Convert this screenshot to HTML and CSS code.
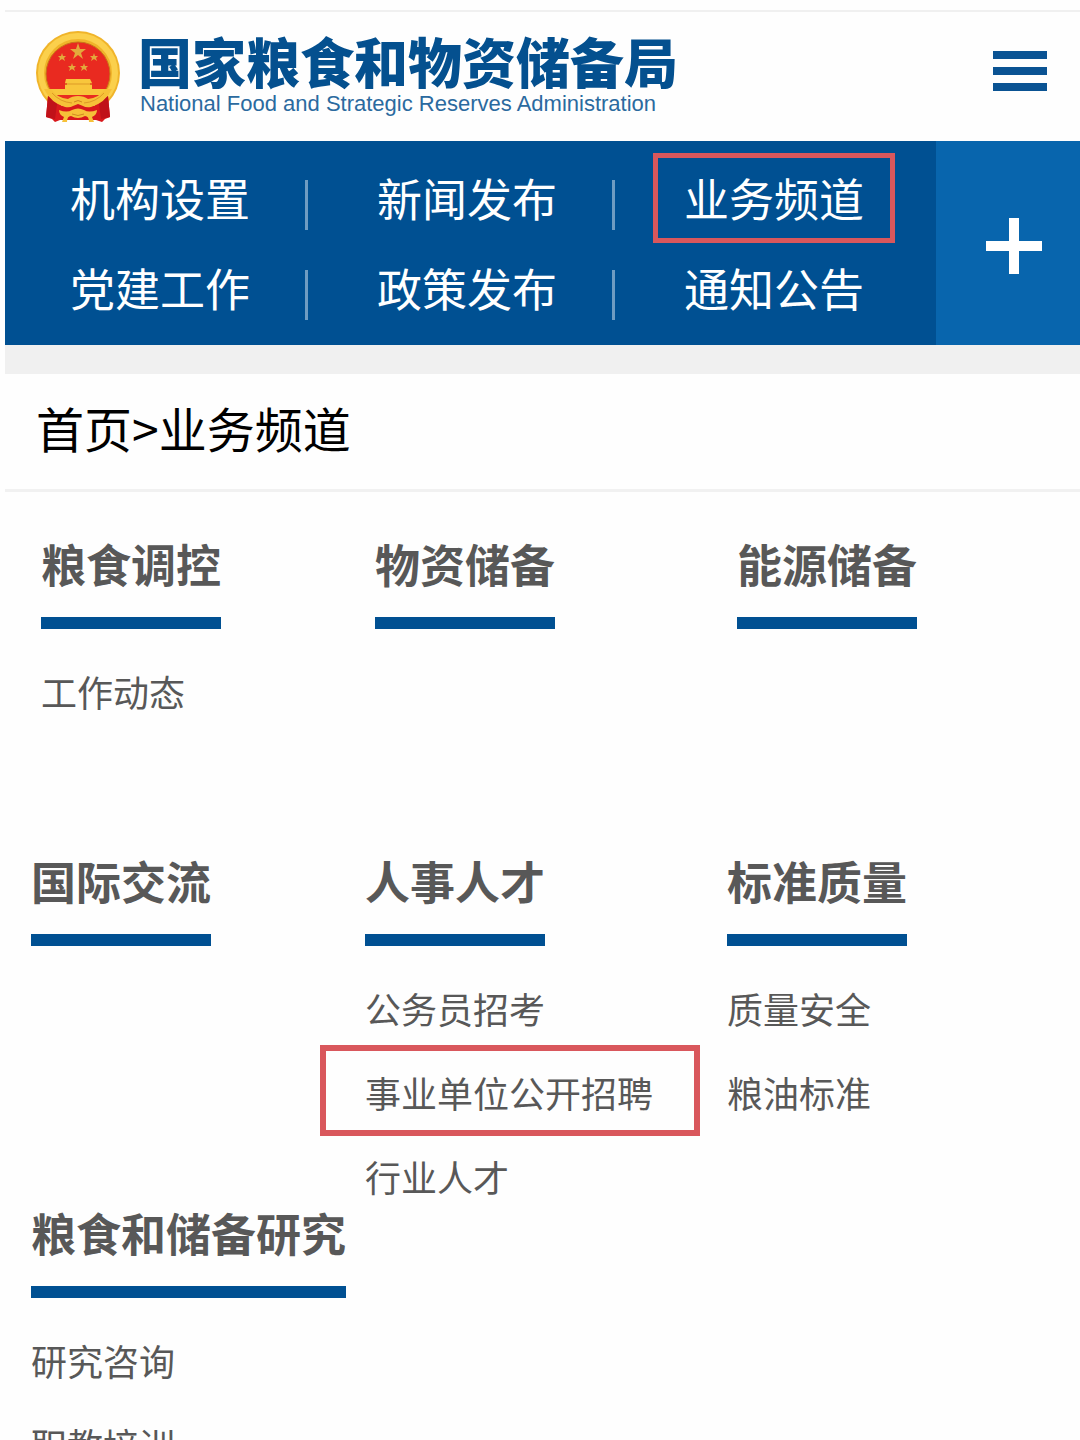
FILE: index.html
```html
<!DOCTYPE html>
<html lang="zh-CN">
<head>
  <meta charset="UTF-8">
  <meta name="viewport" content="width=device-width, initial-scale=1.0">
  <title>业务频道</title>
  <link rel="stylesheet" href="styles.css">
</head>
<body>
  <header class="header">
    <a class="logo" href="#">
      <svg class="emblem" viewBox="0 0 86 92" aria-hidden="true">
        <!-- wreath and field -->
        <circle cx="42" cy="42" r="42" fill="#f0b42a"/>
        <circle cx="42" cy="42" r="37" fill="none" stroke="#fbd04c" stroke-width="6"/>
        <circle cx="42" cy="43" r="32" fill="#e92a20" stroke="#c97718" stroke-width="1"/>
        <g fill="#e3a93c">
          <path d="M42 12l2 6h6l-5 4 2 6-5-4-5 4 2-6-5-4h6z"/>
          <path d="M26 22l1 3h3l-2 2 1 3-3-2-3 2 1-3-2-2h3zM58 22l1 3h3l-2 2 1 3-3-2-3 2 1-3-2-2h3zM36 32l1 3h3l-2 2 1 3-3-2-3 2 1-3-2-2h3zM48 32l1 3h3l-2 2 1 3-3-2-3 2 1-3-2-2h3z"/>
        </g>
        <!-- gate -->
        <path d="M30 48h24l2 4h-2v2h2v4h14l3 6H12l3-6h14v-4h2v-2h-2z" fill="#f8c63c"/>
        <path d="M29 53h27" stroke="#dd9a26"/>
        <!-- ribbon -->
        <path d="M12 65l14 10 16-6 16 6 14-10 2 21-5 2-3 3-6-2H24l-5 2-3-3-6-2z" fill="#d8181c"/>
        <path d="M12 65l9 8-2 15-9-2zM72 65l-9 8 2 15 9-2z" fill="#c01119"/>
        <path d="M8 58q7 14 21 18 5 1 8-1l5-2 5 2q3 2 8 1 14-4 21-18l-7 0q-6 9-17 10-4-3-10-3t-10 3q-11-1-17-10z" fill="#f6c138"/>
        <path d="M16 62q8 9 20 10M68 62q-8 9-20 10" fill="none" stroke="#dd9a26"/>
        <path d="M23 79q8 3 13 0 6-3 12 0 5 3 13 0 0 5-5 7l2 5h-5q0-6-4-6-7 4-14 0-4 0-4 6h-5l2-5q-5-2-5-7z" fill="#f6c138"/>
        <path d="M38 71q4-3 8 0M36 83q6 3 12 0" fill="none" stroke="#d08a20"/>
      </svg>
      <span class="logo-text">
        <span class="logo-cn">国家粮食和物资储备局</span>
        <span class="logo-en">National Food and Strategic Reserves Administration</span>
      </span>
    </a>
    <button class="menu-btn" type="button" aria-label="菜单">
      <svg class="menu-icon" viewBox="0 0 54 40" aria-hidden="true">
        <path d="M0 4h54M0 20h54M0 36h54" stroke="#0a5393" stroke-width="8"/>
      </svg>
    </button>
  </header>

  <nav class="nav">
    <ul class="nav-list">
      <li><a href="#">机构设置</a></li>
      <li><a href="#">新闻发布</a></li>
      <li><a class="marked" href="#">业务频道</a></li>
      <li><a href="#">党建工作</a></li>
      <li><a href="#">政策发布</a></li>
      <li><a href="#">通知公告</a></li>
    </ul>
    <button class="nav-more" type="button" aria-label="更多">
      <svg class="plus-icon" viewBox="0 0 56 56" aria-hidden="true">
        <path d="M28 0v56M0 28h56" stroke="#fff" stroke-width="10"/>
      </svg>
    </button>
  </nav>

  <div class="breadcrumb"><a href="#">首页</a>&gt;<a href="#">业务频道</a></div>

  <main class="channels">
    <!-- first row -->
    <div class="row row-first">
      <section class="channel">
        <h2>粮食调控</h2>
        <ul>
          <li><a href="#">工作动态</a></li>
        </ul>
      </section>
      <section class="channel">
        <h2>物资储备</h2>
      </section>
      <section class="channel">
        <h2>能源储备</h2>
      </section>
    </div>

    <!-- second row -->
    <div class="row">
      <section class="channel">
        <h2>国际交流</h2>
      </section>
      <section class="channel">
        <h2>人事人才</h2>
        <ul>
          <li><a href="#">公务员招考</a></li>
          <li><a class="boxed" href="#">事业单位公开招聘</a></li>
          <li><a href="#">行业人才</a></li>
        </ul>
      </section>
      <section class="channel">
        <h2>标准质量</h2>
        <ul>
          <li><a href="#">质量安全</a></li>
          <li><a href="#">粮油标准</a></li>
        </ul>
      </section>
    </div>

    <!-- third row -->
    <div class="row">
      <section class="channel">
        <h2>粮食和储备研究</h2>
        <ul>
          <li><a href="#">研究咨询</a></li>
          <li><a href="#">职教培训</a></li>
        </ul>
      </section>
    </div>
  </main>
</body>
</html>
```
FILE: styles.css
```css
* {
  box-sizing: border-box;
}
body {
  margin: 0;
  padding: 10px 0 0 5px;
  background-color: #fefefe;
  color: #000;
  font-family: "Noto Sans CJK SC", sans-serif;
}
a {
  color: inherit;
  text-decoration: none;
}
ul {
  list-style: none;
  margin: 0;
  padding: 0;
}
button {
  border: none;
  padding: 0;
  background: none;
  cursor: pointer;
}
svg {
  display: block;
}

/* Header */
.header {
  display: flex;
  justify-content: space-between;
  align-items: flex-start;
  height: 131px;
  padding: 19px 33px 0 31px;
  border-top: 2px solid #f0f0f0;
}
.logo {
  display: flex;
  gap: 16px;
  color: #04508f;
}
.emblem {
  width: 86px;
  height: 92px;
}
.logo-text {
  display: flex;
  flex-direction: column;
  padding-top: 2px;
  white-space: nowrap;
}
.logo-cn {
  font-size: 54px;
  font-weight: 900;
  line-height: 56px;
}
.logo-en {
  padding-left: 2px;
  font-family: "Liberation Sans", Arial, sans-serif;
  font-size: 22px;
  line-height: 30px;
  color: #2b6a9f;
}
.menu-btn {
  margin-top: 20px;
}
.menu-icon {
  width: 54px;
  height: 40px;
}

/* Navigation */
.nav {
  display: flex;
  background-color: #005092;
}
.nav-list {
  flex: 1;
  display: grid;
  grid-template-columns: repeat(3, 1fr);
  padding: 12px 10px 12px 0;
}
.nav-list li {
  display: flex;
  align-items: center;
  justify-content: flex-end;
}
.nav-list li::after {
  content: "";
  width: 3px;
  height: 50px;
  margin: 14px 4px 0 24px;
  background-color: #6f9cc2;
}
.nav-list li:nth-child(3n)::after {
  background-color: transparent;
}
.nav-list a {
  height: 90px;
  padding: 0 26px;
  border: 5px solid transparent;
  color: #fff;
  font-size: 45px;
  line-height: 80px;
  white-space: nowrap;
}
.nav-list .marked {
  border-color: #d9575c;
}
.nav-more {
  display: flex;
  align-items: center;
  justify-content: center;
  width: 144px;
  padding: 6px 0 0 12px;
  background-color: #0865ad;
}
.plus-icon {
  width: 56px;
  height: 56px;
}

/* Breadcrumb */
.breadcrumb {
  padding: 21px 31px 30px;
  border-top: 29px solid #f0f0f0;
  border-bottom: 3px solid #f1f1f1;
  font-size: 48px;
  line-height: 64px;
}

/* Channel list */
.channels {
  padding: 47px 0 0 26px;
  color: #585858;
}
.row {
  display: grid;
  grid-template-columns: 334fr 362fr 353fr;
}
.row-first {
  min-height: 317px;
}
.row-first .channel {
  padding-left: 10px;
}
.channel h2 {
  width: max-content;
  margin: 0 0 30px;
  padding-bottom: 28px;
  border-bottom: 12px solid #005092;
  font-size: 45px;
  line-height: 50px;
}
.channel ul {
  display: grid;
  gap: 20px;
}
.channel li {
  font-size: 36px;
  line-height: 64px;
  white-space: nowrap;
}
.boxed {
  display: inline-block;
  position: relative;
}
.boxed::before {
  content: "";
  position: absolute;
  inset: -15px -47px -12px -45px;
  border: 6px solid #d9575c;
}
```
